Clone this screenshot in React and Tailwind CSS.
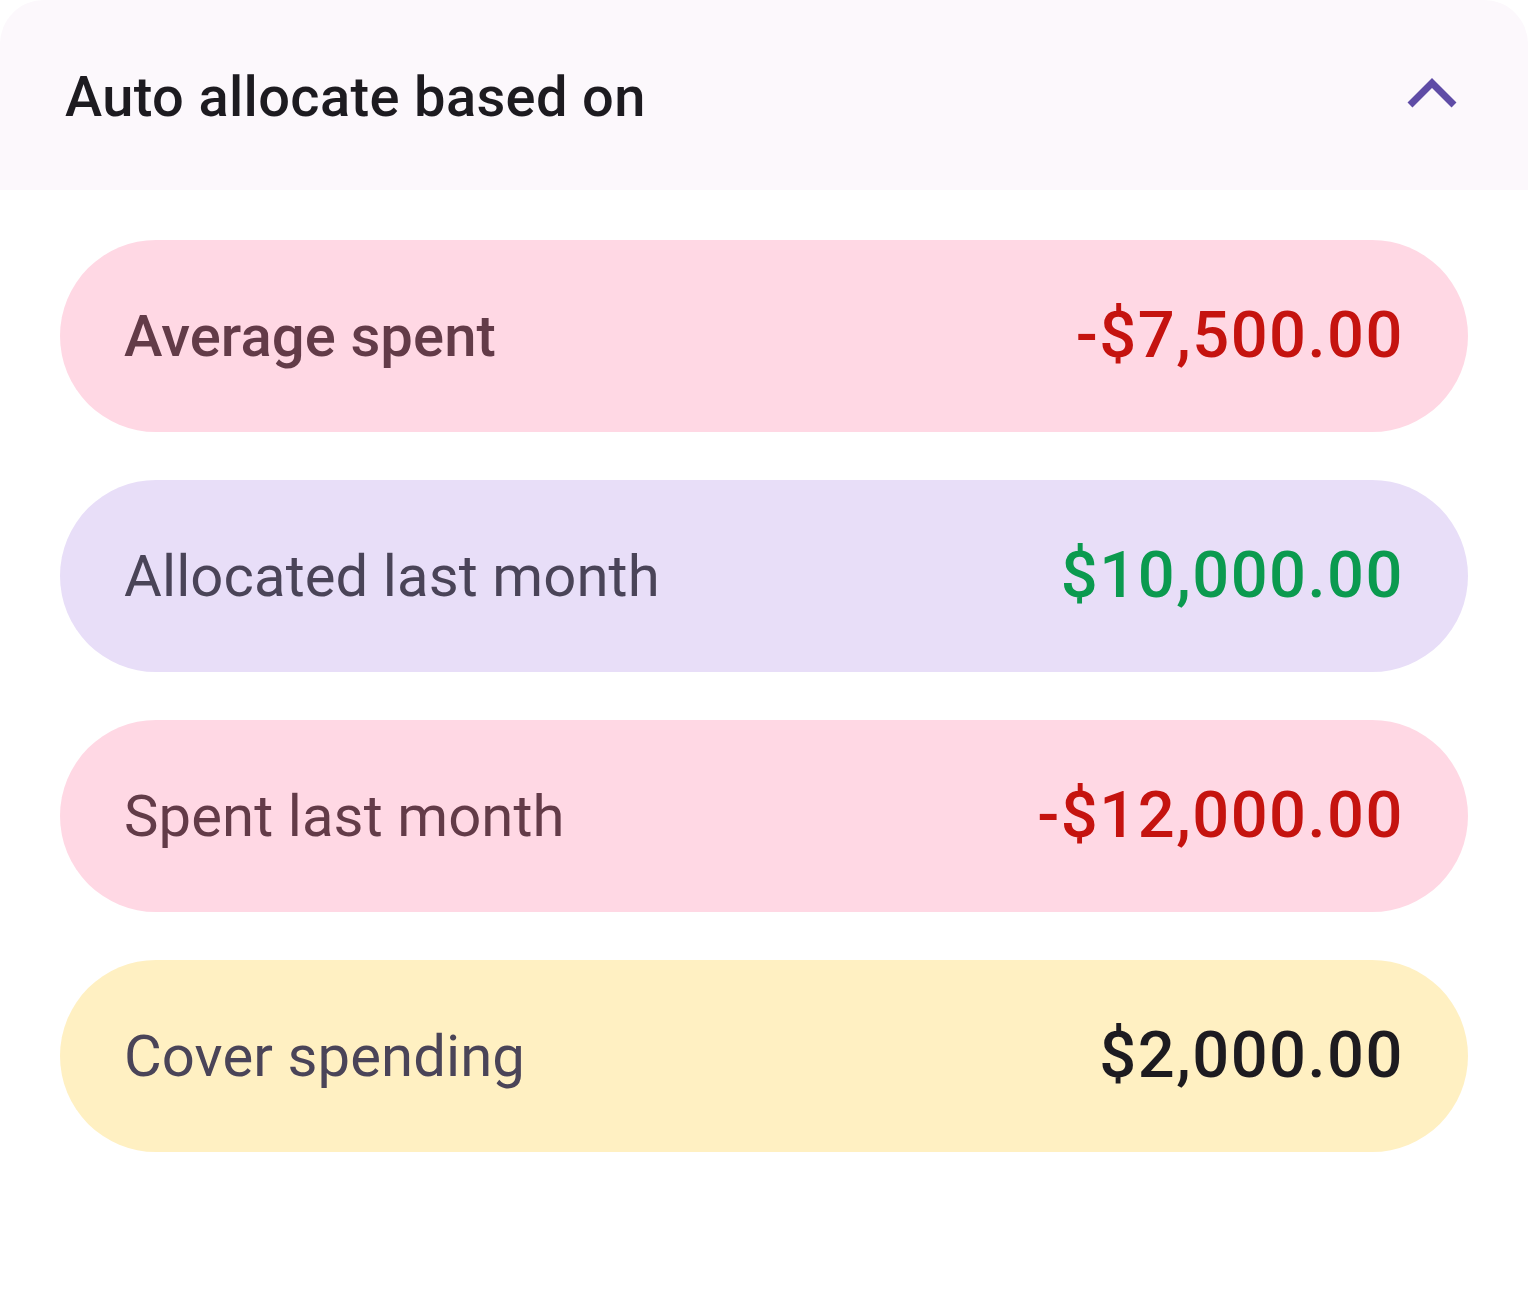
import React from 'react';

const rows = [
  { label: 'Average spent', amount: '-$7,500.00', bg: 'bg-[#ffd8e4]', labelColor: 'text-[#633b48]', amountColor: 'text-[#c5130f]', bold: true },
  { label: 'Allocated last month', amount: '$10,000.00', bg: 'bg-[#e8def8]', labelColor: 'text-[#4a4458]', amountColor: 'text-[#0b9a4f]' },
  { label: 'Spent last month', amount: '-$12,000.00', bg: 'bg-[#ffd8e4]', labelColor: 'text-[#633b48]', amountColor: 'text-[#c5130f]' },
  { label: 'Cover spending', amount: '$2,000.00', bg: 'bg-[#fff0c2]', labelColor: 'text-[#4a4458]', amountColor: 'text-[#1d1b20]' },
];

const App = () => {
  return (
    <div className="w-[1528px] h-[1292px] bg-white font-['Roboto',sans-serif]">
      <div className="h-[190px] bg-[#fcf8fc] rounded-t-[44px] flex items-center justify-between pl-[65px] pr-[70px]">
        <h2 className="text-[56px] font-medium text-[#1d1b20] tracking-[0.35px] mt-[3px]">Auto allocate based on</h2>
        <svg width="52" height="34" viewBox="0 0 52 34" className="mt-[-2px]">
          <path d="M4 28 L26 6 L48 28" fill="none" stroke="#5f4ca6" strokeWidth="7" />
        </svg>
      </div>

      <div className="flex flex-col gap-[48px] px-[60px] pt-[50px]">
        {rows.map((r, i) => (
          <div key={i} className={`h-[192px] rounded-full ${r.bg} flex items-center justify-between px-[64px]`}>
            <span className={`text-[58px] ${r.bold ? 'font-medium' : 'font-normal'} ${r.labelColor} tracking-[0.1px]`}>{r.label}</span>
            <span className={`text-[65px] font-medium ${r.amountColor} tracking-[1.5px]`}>{r.amount}</span>
          </div>
        ))}
      </div>
    </div>
  );
};

export default App;
